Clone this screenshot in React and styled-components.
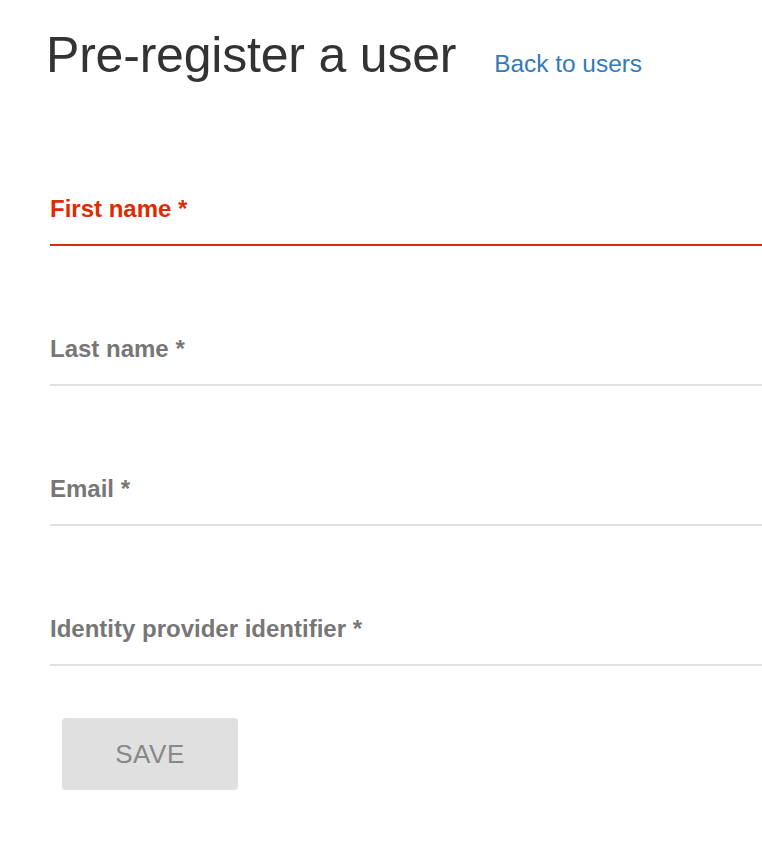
import React from 'react';
import styled, { createGlobalStyle } from 'styled-components';

const GlobalStyle = createGlobalStyle`
  body {
    margin: 0;
    background: #ffffff;
    font-family: "Liberation Sans", Arial, Helvetica, sans-serif;
  }
`;

const Page = styled.main`
  width: 762px;
  padding-top: 28px;
  padding-bottom: 56px;
`;

const Header = styled.header`
  display: flex;
  align-items: baseline;
  gap: 38px;
  padding-left: 46px;
`;

const Title = styled.h1`
  margin: 0;
  font-size: 50px;
  line-height: 55px;
  font-weight: 400;
  letter-spacing: -0.2px;
  color: #333333;
`;

const BackLink = styled.a`
  font-size: 24.4px;
  color: #337ab7;
  text-decoration: none;
  cursor: pointer;
`;

const Form = styled.form`
  margin-top: 23px;
  padding-left: 50px;
`;

const Field = styled.label`
  box-sizing: border-box;
  display: flex;
  flex-direction: column;
  justify-content: flex-end;
  height: 140px;
  padding-bottom: 21px;
  border-bottom: 2px solid ${(p) => (p.$active ? '#dd2c00' : '#e0e0e0')};
`;

const LabelText = styled.span`
  font-size: 24px;
  line-height: 28px;
  font-weight: 700;
  color: ${(p) => (p.$active ? '#dd2c00' : '#777777')};
`;

const SaveButton = styled.button`
  display: flex;
  align-items: center;
  justify-content: center;
  width: 176px;
  height: 72px;
  margin: 52px 0 0 12px;
  border: none;
  border-radius: 4px;
  background: #e0e0e0;
  color: #888888;
  font-family: inherit;
  font-size: 26px;
  letter-spacing: 0.5px;
`;

const fields = [
  { label: 'First name *', active: true },
  { label: 'Last name *' },
  { label: 'Email *' },
  { label: 'Identity provider identifier *' },
];

export default function App() {
  return (
    <>
      <GlobalStyle />
      <Page>
        <Header>
          <Title>Pre-register a user</Title>
          <BackLink>Back to users</BackLink>
        </Header>
        <Form onSubmit={(e) => e.preventDefault()}>
          {fields.map((f) => (
            <Field key={f.label} $active={f.active}>
              <LabelText $active={f.active}>{f.label}</LabelText>
            </Field>
          ))}
          <SaveButton type="button" disabled>
            SAVE
          </SaveButton>
        </Form>
      </Page>
    </>
  );
}
